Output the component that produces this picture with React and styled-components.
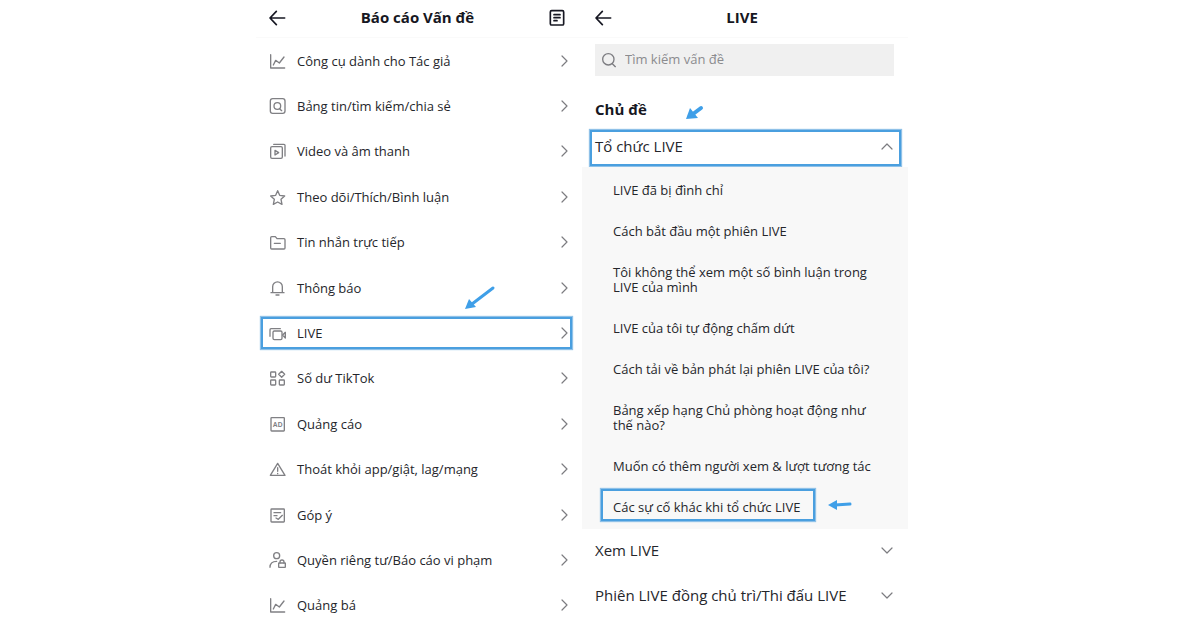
import React from 'react'
import styled, { createGlobalStyle, css } from 'styled-components'

const GlobalStyle = createGlobalStyle`
  * {
    box-sizing: border-box;
  }
  body {
    margin: 0;
    background: #fff;
    color: #25262b;
    font-family: 'Open Sans', 'Noto Sans', sans-serif;
  }
`

const highlight = css`
  border: 2px solid ${({ $marked }) => ($marked ? '#4a9fdf' : 'transparent')};
  box-shadow: ${({ $marked }) => ($marked ? '0 0 1px 1px #8fc1e8' : 'none')};
`

const Page = styled.main`
  display: flex;
  justify-content: center;
  min-height: 100vh;
  padding-right: 36px;
`

const Panel = styled.section`
  display: flex;
  flex-direction: column;
  flex: 0 1 326px;
  min-width: 0;
`

const Header = styled.header`
  display: flex;
  align-items: center;
  justify-content: space-between;
  height: 38px;
  padding: 0 16px 2px 13px;
  border-bottom: 1px solid #fafafa;
`

const Title = styled.h1`
  margin: 0;
  padding-bottom: 2px;
  font-size: 15px;
  line-height: 20px;
  font-weight: 700;
  color: #161722;
`

const IconButton = styled.button`
  display: flex;
  padding: 0;
  border: 0;
  background: none;
  color: #161722;
  cursor: pointer;
`

const Spacer = styled.span`
  width: 21px;
`

const Svg = styled.svg`
  flex: none;
  width: ${({ $w }) => $w || 18}px;
  height: ${({ $h }) => $h || 18}px;
  fill: none;
  stroke: currentColor;
  stroke-width: ${({ $stroke }) => $stroke || 4};
  stroke-linecap: round;
  stroke-linejoin: round;
  color: ${({ $color }) => $color || 'inherit'};
`

const Menu = styled.ul`
  display: flex;
  flex-direction: column;
  flex: 1;
  margin: 0;
  padding: 0 10px 2px 5px;
  list-style: none;
`

const MenuItem = styled.li`
  position: relative;
  display: flex;
  align-items: center;
  flex: 1;
`

const MenuButton = styled.button`
  display: flex;
  align-items: center;
  gap: 10px;
  width: 100%;
  height: 32px;
  padding: 0 2px 0 6px;
  ${highlight}
  background: none;
  color: #25262b;
  font: inherit;
  font-size: 13px;
  line-height: 20px;
  text-align: left;
  cursor: pointer;
`

const Label = styled.span`
  flex: 1;
`

const SearchBox = styled.label`
  display: flex;
  align-items: center;
  gap: 7px;
  height: 32px;
  margin: 6px 14px 0 13px;
  padding: 0 5px;
  background: #f0f0f0;
  color: #7c7c80;
`

const SearchInput = styled.input`
  flex: 1;
  min-width: 0;
  padding: 0 0 2px;
  border: 0;
  outline: 0;
  background: none;
  font: inherit;
  font-size: 13px;
  line-height: 20px;

  &::placeholder {
    color: #8b8b8e;
    opacity: 1;
  }
`

const TopicHead = styled.div`
  position: relative;
  padding: 23px 13px 11px;
`

const TopicTitle = styled.h2`
  margin: 0;
  font-size: 15px;
  line-height: 20px;
  font-weight: 700;
  color: #161722;
`

const Topic = styled.button`
  display: flex;
  align-items: center;
  justify-content: space-between;
  margin: 0 7px 0 8px;
  padding: ${({ $marked }) => ($marked ? '4px 6px 8px 3px' : '9px 6px 12px 3px')};
  ${highlight}
  background: none;
  color: #25262b;
  font: inherit;
  font-size: 15px;
  line-height: 20px;
  text-align: left;
  cursor: pointer;

  & + ul {
    margin-top: 1px;
  }
`

const Questions = styled.ul`
  margin: 0;
  padding: 3px 20px 1px 19px;
  background: #f8f8f8;
  list-style: none;
`

const Question = styled.li`
  display: flex;
  align-items: center;
  gap: 12px;
  padding: 2px 0 7px;
`

const QuestionLink = styled.a`
  padding: 9px 13px 4px 10px;
  ${highlight}
  color: #25262b;
  font-size: 13px;
  line-height: 15px;
  text-decoration: none;
`

// hand-drawn pointers float over the list
const Pointer = styled.svg`
  position: absolute;
  left: ${({ $left }) => $left}px;
  bottom: ${({ $bottom }) => $bottom}px;
  fill: #3f9fe8;
  stroke: #3f9fe8;
  stroke-linecap: round;
  pointer-events: none;
`

const InlinePointer = styled.svg`
  flex: none;
  fill: #3f9fe8;
  stroke: #3f9fe8;
  stroke-linecap: round;
`

const gray = '#808084'

const Icon = ({ children, ...rest }) => (
  <Svg viewBox="0 0 54 54" aria-hidden="true" {...rest}>
    {children}
  </Svg>
)

const ChartIcon = () => (
  <Icon $color={gray}>
    <path d="M5 8v40h42M13 39l7-14 11 8 14-18" />
  </Icon>
)

const FindIcon = () => (
  <Icon $color={gray}>
    <rect x="4" y="5" width="44" height="44" rx="7" />
    <circle cx="25" cy="27" r="10" />
    <path d="M32 35l6 6" />
  </Icon>
)

const VideoIcon = () => (
  <Icon $color={gray}>
    <rect x="5" y="14" width="35" height="35" rx="4" />
    <path d="M14 7h31a3 3 0 0 1 3 3v32M18 25l11 7-11 7z" />
  </Icon>
)

const StarIcon = () => (
  <Icon $color={gray}>
    <path d="M26 8l6 14 15 2-11 10 3 15-13-7-13 7 3-15L5 24l15-2z" />
  </Icon>
)

const FolderIcon = () => (
  <Icon $color={gray}>
    <path d="M8 11h11l5 6h21a3 3 0 0 1 3 3v25a3 3 0 0 1-3 3H8a3 3 0 0 1-3-3V14a3 3 0 0 1 3-3zM16 31h18" />
  </Icon>
)

const BellIcon = () => (
  <Icon $color={gray}>
    <path d="M6 41h39M11 41V23a14 14 0 0 1 29 0v18M21 48h9" />
  </Icon>
)

const LiveIcon = () => (
  <Icon $color={gray}>
    <path d="M3 37V17a3 3 0 0 1 3-3h28M41 33l8-8v17z" />
    <rect x="12" y="21" width="27" height="26" rx="4" />
  </Icon>
)

const GridIcon = () => (
  <Icon $color={gray}>
    <rect x="5" y="9" width="15" height="15" rx="2" />
    <rect x="5" y="33" width="15" height="15" rx="2" />
    <rect x="31" y="33" width="15" height="15" rx="2" />
    <path d="M38 7l9 9-9 9-9-9z" />
  </Icon>
)

const AdText = styled.text`
  font: 700 20px 'Liberation Sans', sans-serif;
  fill: currentColor;
  stroke: none;
`

const AdIcon = () => (
  <Icon $color={gray}>
    <rect x="6" y="8" width="40" height="40" rx="2" />
    <AdText x="26" y="35" textAnchor="middle">AD</AdText>
  </Icon>
)

const WarningIcon = () => (
  <Icon $color={gray}>
    <path d="M26 10l22 36H4zM26 23v11M26 40v1" />
  </Icon>
)

const FeedbackIcon = () => (
  <Icon $color={gray}>
    <rect x="6" y="9" width="40" height="39" rx="2" />
    <path d="M15 20h20M15 29h9M21 36l7 4 12-12" />
  </Icon>
)

const PrivacyIcon = () => (
  <Icon $color={gray}>
    <circle cx="23" cy="14" r="9" />
    <path d="M3 49c0-11 8-18 20-18M33 36v-3a6 6 0 0 1 12 0v3" />
    <rect x="29" y="36" width="20" height="13" rx="1" />
  </Icon>
)

const BackIcon = () => (
  <Icon $stroke={5}>
    <path d="M3 27h44M22 7L3 27l19 20" />
  </Icon>
)

const ReportIcon = () => (
  <Icon $stroke={5}>
    <rect x="7" y="5" width="40" height="43" rx="4" />
    <path d="M18 17h18M18 26h18M18 35h9" />
  </Icon>
)

const SearchIcon = () => (
  <Icon>
    <circle cx="25" cy="25" r="17" />
    <path d="M37 38l9 9" />
  </Icon>
)

const ChevronRight = () => (
  <Svg viewBox="0 0 8 12" $w={8} $h={12} $stroke={1.2} $color="#7c7c80">
    <path d="M2 1l5 5-5 5" />
  </Svg>
)

const ChevronToggle = ({ open }) => (
  <Svg viewBox="0 0 12 8" $w={12} $h={8} $stroke={1.2} $color="#7c7c80">
    <path d={open ? 'M1 7l5-5 5 5' : 'M1 2l5 5 5-5'} />
  </Svg>
)

const menu = [
  { label: 'Công cụ dành cho Tác giả', icon: ChartIcon },
  { label: 'Bảng tin/tìm kiếm/chia sẻ', icon: FindIcon },
  { label: 'Video và âm thanh', icon: VideoIcon },
  { label: 'Theo dõi/Thích/Bình luận', icon: StarIcon },
  { label: 'Tin nhắn trực tiếp', icon: FolderIcon },
  { label: 'Thông báo', icon: BellIcon },
  { label: 'LIVE', icon: LiveIcon, marked: true },
  { label: 'Số dư TikTok', icon: GridIcon },
  { label: 'Quảng cáo', icon: AdIcon },
  { label: 'Thoát khỏi app/giật, lag/mạng', icon: WarningIcon },
  { label: 'Góp ý', icon: FeedbackIcon },
  { label: 'Quyền riêng tư/Báo cáo vi phạm', icon: PrivacyIcon },
  { label: 'Quảng bá', icon: ChartIcon },
]

const questions = [
  { label: 'LIVE đã bị đình chỉ' },
  { label: 'Cách bắt đầu một phiên LIVE' },
  { label: 'Tôi không thể xem một số bình luận trong LIVE của mình' },
  { label: 'LIVE của tôi tự động chấm dứt' },
  { label: 'Cách tải về bản phát lại phiên LIVE của tôi?' },
  { label: 'Bảng xếp hạng Chủ phòng hoạt động như thế nào?' },
  { label: 'Muốn có thêm người xem & lượt tương tác' },
  { label: 'Các sự cố khác khi tổ chức LIVE', marked: true },
]

function ReportPanel() {
  return (
    <Panel>
      <Header>
        <IconButton aria-label="Quay lại"><BackIcon /></IconButton>
        <Title>Báo cáo Vấn đề</Title>
        <IconButton aria-label="Báo cáo"><ReportIcon /></IconButton>
      </Header>
      <Menu>
        {menu.map(({ label, icon: ItemIcon, marked }) => (
          <MenuItem key={label}>
            <MenuButton $marked={marked}>
              <ItemIcon />
              <Label>{label}</Label>
              <ChevronRight />
            </MenuButton>
            {marked && (
              <Pointer $left={203} $bottom={45} width="32" height="26" viewBox="0 0 32 26">
                <path d="M29 3L8 19" strokeWidth="3" />
                <path d="M1 24l4-10 7 8z" strokeWidth="0" />
              </Pointer>
            )}
          </MenuItem>
        ))}
      </Menu>
    </Panel>
  )
}

function LivePanel() {
  return (
    <Panel>
      <Header>
        <IconButton aria-label="Quay lại"><BackIcon /></IconButton>
        <Title>LIVE</Title>
        <Spacer />
      </Header>
      <SearchBox>
        <SearchIcon />
        <SearchInput type="search" placeholder="Tìm kiếm vấn đề" aria-label="Tìm kiếm vấn đề" />
      </SearchBox>
      <TopicHead>
        <TopicTitle>Chủ đề</TopicTitle>
        <Pointer $left={103} $bottom={10} width="20" height="16" viewBox="0 0 20 16">
          <path d="M16 4L8 10" strokeWidth="4" />
          <path d="M1 15l4-11 8 10z" strokeWidth="0" />
        </Pointer>
      </TopicHead>
      <Topic $marked aria-expanded="true">
        Tổ chức LIVE
        <ChevronToggle open />
      </Topic>
      <Questions>
        {questions.map(({ label, marked }) => (
          <Question key={label}>
            <QuestionLink href="#" $marked={marked}>{label}</QuestionLink>
            {marked && (
              <InlinePointer width="26" height="12" viewBox="0 0 26 12">
                <path d="M8 6l15-1" strokeWidth="3" />
                <path d="M1 6l9-5v10z" strokeWidth="0" />
              </InlinePointer>
            )}
          </Question>
        ))}
      </Questions>
      <Topic aria-expanded="false">
        Xem LIVE
        <ChevronToggle />
      </Topic>
      <Topic aria-expanded="false">
        Phiên LIVE đồng chủ trì/Thi đấu LIVE
        <ChevronToggle />
      </Topic>
    </Panel>
  )
}

function App() {
  return (
    <>
      <GlobalStyle />
      <Page>
        <ReportPanel />
        <LivePanel />
      </Page>
    </>
  )
}

export default App
